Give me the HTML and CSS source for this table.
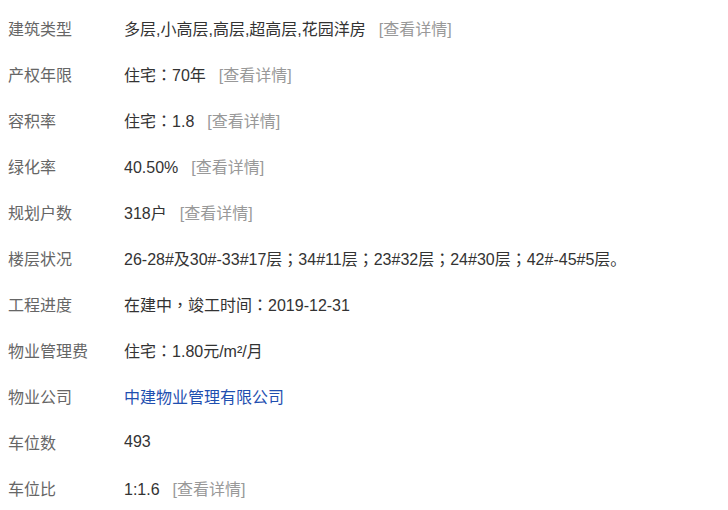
FILE: index.html
```html
<!DOCTYPE html>
<html lang="zh-CN">
<head>
<meta charset="utf-8">
<link rel="stylesheet" href="styles.css">
</head>
<body>
<ul class="info">
  <li class="row"><span class="label">建筑类型</span><span class="value">多层,小高层,高层,超高层,花园洋房<a class="more">[查看详情]</a></span></li>
  <li class="row"><span class="label">产权年限</span><span class="value">住宅<span class="punct" lang="zh-TW">：</span>70年<a class="more">[查看详情]</a></span></li>
  <li class="row"><span class="label">容积率</span><span class="value">住宅<span class="punct" lang="zh-TW">：</span>1.8<a class="more">[查看详情]</a></span></li>
  <li class="row"><span class="label">绿化率</span><span class="value">40.50%<a class="more">[查看详情]</a></span></li>
  <li class="row"><span class="label">规划户数</span><span class="value">318户<a class="more">[查看详情]</a></span></li>
  <li class="row"><span class="label">楼层状况</span><span class="value">26-28#及30#-33#17层<span class="punct" lang="zh-TW">；</span>34#11层<span class="punct" lang="zh-TW">；</span>23#32层<span class="punct" lang="zh-TW">；</span>24#30层<span class="punct" lang="zh-TW">；</span>42#-45#5层。</span></li>
  <li class="row"><span class="label">工程进度</span><span class="value">在建中<span class="punct" lang="zh-TW">，</span>竣工时间<span class="punct" lang="zh-TW">：</span>2019-12-31</span></li>
  <li class="row"><span class="label">物业管理费</span><span class="value">住宅<span class="punct" lang="zh-TW">：</span>1.80元/m²/月</span></li>
  <li class="row"><span class="label">物业公司</span><span class="value"><a class="company">中建物业管理有限公司</a></span></li>
  <li class="row"><span class="label">车位数</span><span class="value">493</span></li>
  <li class="row"><span class="label">车位比</span><span class="value">1:1.6<a class="more">[查看详情]</a></span></li>
</ul>
</body>
</html>
```
FILE: styles.css
```css
html, body {
  margin: 0;
  padding: 0;
  background: #fff;
}
body {
  font-family: "Liberation Sans", "Noto Sans CJK SC", sans-serif;
  font-size: 16px;
}
.info {
  list-style: none;
  margin: 0;
  padding: 5px 8px 0;
}
.row {
  display: flex;
  align-items: center;
  height: 46px;
}
.label {
  width: 116px;
  flex: none;
  color: #666;
}
.value {
  color: #333;
  white-space: nowrap;
}
.punct {
  font-family: "Noto Sans CJK TC", sans-serif;
}
.more {
  color: #999;
  margin-left: 13px;
}
.company {
  color: #1f4fb0;
}
```
